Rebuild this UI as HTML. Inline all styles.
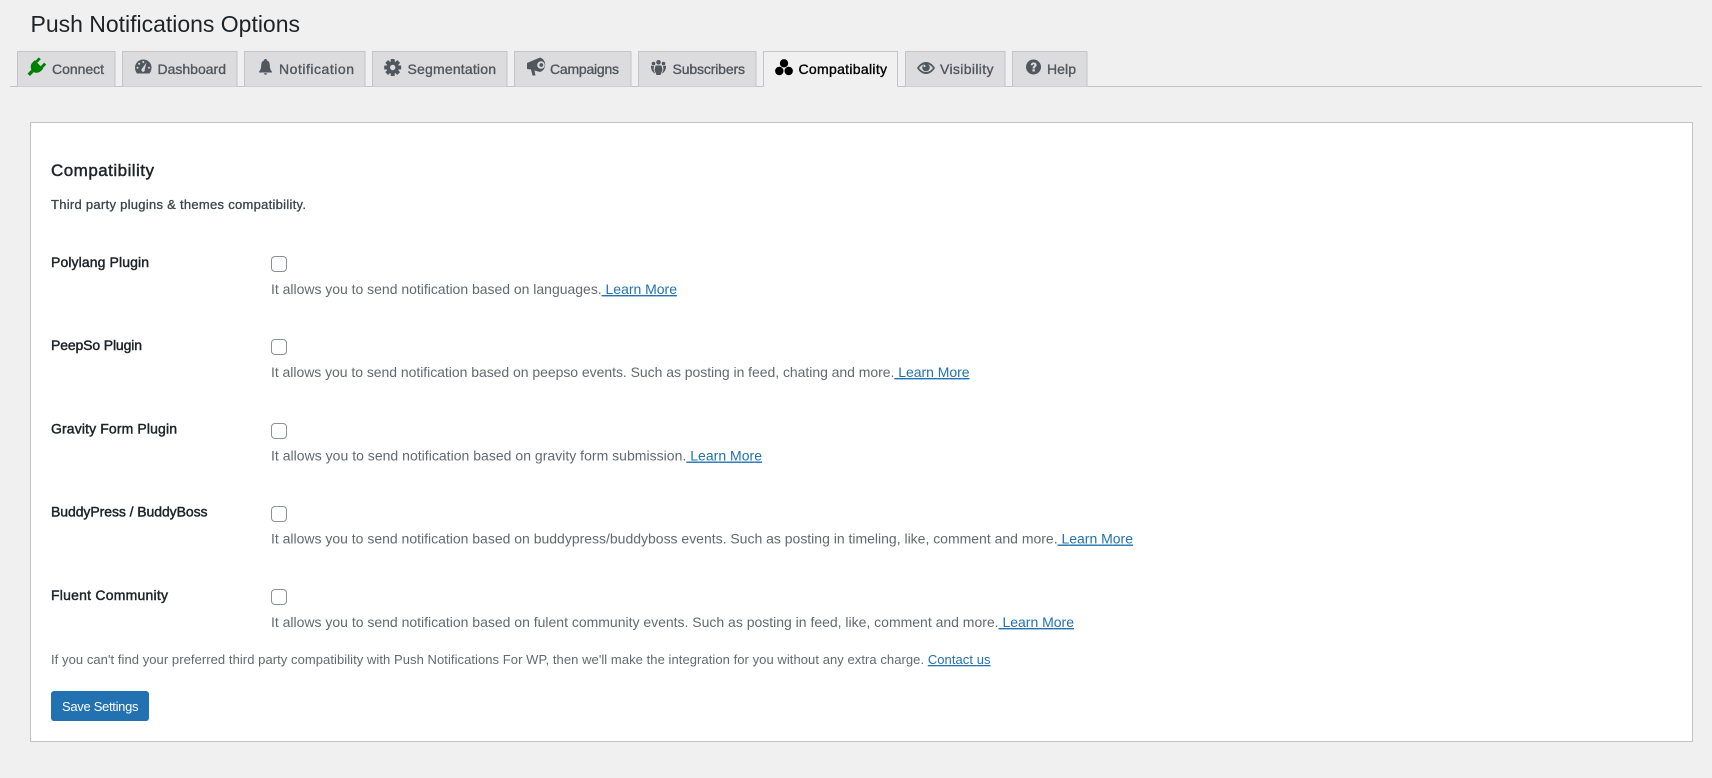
<!DOCTYPE html>
<html lang="en">
<head>
<meta charset="utf-8">
<title>Push Notifications Options</title>
<style>
html,body{margin:0;padding:0;width:1712px;height:778px;overflow:hidden;background:#f0f0f1}
svg{position:absolute;left:0;top:0;display:block}
text{font-family:"Liberation Sans",Arial,sans-serif;white-space:pre}
.tab{font-size:14px;fill:#50575e;stroke:#50575e;stroke-width:.35px}
.label{font-size:14px;fill:#1d2327;stroke:#1d2327;stroke-width:.45px}
.help{font-size:14px;fill:#646970}
.link{fill:#2271b1;text-decoration:underline}
input[type=checkbox]{appearance:none;-webkit-appearance:none;position:absolute;left:271px;width:16px;height:16px;margin:0;padding:0;box-sizing:border-box;background:#fff;border:1px solid #8c8f94;border-radius:4px}
</style>
</head>
<body>
<svg width="1712" height="778" viewBox="0 0 1712 778" xmlns="http://www.w3.org/2000/svg">
  <text x="30.500" y="32" font-size="23" fill="#1d2327" textLength="269.500">Push Notifications Options</text>

  <!-- nav line -->
  <rect x="10" y="86" width="1692" height="1" fill="#c3c4c7"/>

  <!-- tabs -->
  <g fill="#dcdcde" stroke="#c3c4c7">
    <path d="M17.5 86.5V51.5H115V86.5"/>
    <path d="M122.5 86.5V51.5H237V86.5"/>
    <path d="M244.5 86.5V51.5H365V86.5"/>
    <path d="M372.5 86.5V51.5H507V86.5"/>
    <path d="M514.5 86.5V51.5H631V86.5"/>
    <path d="M638.5 86.5V51.5H756V86.5"/>
    <path d="M905.5 86.5V51.5H1005V86.5"/>
    <path d="M1012.5 86.5V51.5H1087V86.5"/>
  </g>
  <rect x="763.5" y="51.5" width="134" height="36" fill="#f0f0f1"/>
  <path d="M763.5 86.5V51.5H897.5V86.5" fill="none" stroke="#c3c4c7"/>

  <!-- plug -->
  <g transform="translate(36.5,67) rotate(45)" fill="#008000">
    <rect x="-5.2" y="-8.5" width="2.8" height="5.5"/>
    <rect x="2.4" y="-8.5" width="2.8" height="5.5"/>
    <path d="M-6 -3.500H6V-.5C6 3.500 3 5 1.700 5.500V11H-1.700V5.500C-3 5-6 3.500-6 -.5Z"/>
  </g>

  <!-- gauge -->
  <path d="M137 73.500C135.800 72 135 70 135 67.500C135 63 138.700 59.500 143.300 59.500C147.900 59.500 151.500 63 151.500 67.500C151.500 70 150.700 72 149.500 73.500Z" fill="#50575e"/>
  <g fill="#dcdcde">
    <circle cx="143.300" cy="62" r="1"/><circle cx="139.200" cy="63.800" r="1"/><circle cx="137.500" cy="67.800" r="1"/><circle cx="149" cy="67.800" r="1"/>
    <path d="M146.500 62.500L144.700 69.500A1.700 1.700 0 1 1 141.800 69Z"/>
  </g>

  <!-- bell -->
  <path d="M265.500 59C264.500 59 264 59.700 264 60.500C261.800 61.300 261.300 63 261.200 65.500C261 68.500 260.500 70 259 71.700V72.500H272V71.700C270.500 70 270 68.500 269.800 65.500C269.700 63 269.200 61.300 267 60.500C267 59.700 266.500 59 265.500 59ZM263.800 73.300C264 74.300 264.600 74.800 265.500 74.800C266.400 74.800 267 74.300 267.200 73.300Z" fill="#50575e"/>

  <!-- gear -->
  <g transform="translate(392.700,67.500)" fill="#50575e">
    <rect x="-2" y="-8.500" width="4" height="17" rx=".5"/>
    <rect x="-2" y="-8.500" width="4" height="17" rx=".5" transform="rotate(45)"/>
    <rect x="-2" y="-8.500" width="4" height="17" rx=".5" transform="rotate(90)"/>
    <rect x="-2" y="-8.500" width="4" height="17" rx=".5" transform="rotate(135)"/>
    <circle r="6.200"/>
    <circle r="2.700" fill="#dcdcde"/>
  </g>

  <!-- megaphone -->
  <path d="M527 63V69L531 69.500L532.500 75.500H535.500L534.500 70.500L540 72A7 7.500 0 0 0 540 57.500Z" fill="#50575e"/>
  <circle cx="541" cy="65" r="3.800" fill="#dcdcde"/>
  <circle cx="541.300" cy="65" r="1.900" fill="#50575e"/>

  <!-- people -->
  <g fill="#50575e">
    <circle cx="658.500" cy="62.300" r="2.300"/>
    <circle cx="653.500" cy="63.500" r="1.800"/>
    <circle cx="663.500" cy="63.500" r="1.800"/>
    <path d="M655.500 65.500H661.500L662.500 70L660.500 75H656.500L654.500 70Z"/>
    <path d="M651 65.800H654L653.500 69.500L655 73.500C652.500 72.500 650.800 69.500 651 65.800Z"/>
    <path d="M666 65.800H663L663.500 69.500L662 73.500C664.500 72.500 666.200 69.500 666 65.800Z"/>
  </g>

  <!-- three circles -->
  <g fill="#000">
    <circle cx="784" cy="63.300" r="4.200"/>
    <circle cx="779.300" cy="71" r="4.200"/>
    <circle cx="788.700" cy="71" r="4.200"/>
  </g>

  <!-- eye -->
  <path d="M917 68C919.500 64.200 922.500 62 926 62C929.500 62 932.500 64.200 935 68C932.500 71.800 929.500 74 926 74C922.500 74 919.500 71.800 917 68Z" fill="#50575e"/>
  <path d="M919 68C921 65.500 923.200 64 926 64C928.800 64 931 65.500 933 68C931 70.500 928.800 72 926 72C923.200 72 921 70.500 919 68Z" fill="#dcdcde"/>
  <circle cx="926" cy="67.500" r="3.800" fill="#50575e"/>
  <circle cx="924.500" cy="66" r="1.100" fill="#dcdcde"/>

  <!-- help -->
  <circle cx="1033.500" cy="67" r="7.500" fill="#50575e"/>
  <path d="M1030.700 65.200C1030.800 63.500 1032 62.500 1033.700 62.500C1035.400 62.500 1036.600 63.500 1036.600 65C1036.600 66.800 1034.700 67 1034.700 68.500H1032.600C1032.500 66.300 1034.400 66 1034.400 65C1034.400 64.500 1034.100 64.200 1033.600 64.200C1033 64.200 1032.800 64.600 1032.700 65.200ZM1032.500 69.300H1034.800V71.500H1032.500Z" fill="#dcdcde"/>

  <!-- tab labels -->
  <text class="tab" x="52" y="74" textLength="52">Connect</text>
  <text class="tab" x="157.500" y="74" textLength="68.500">Dashboard</text>
  <text class="tab" x="279" y="74" textLength="75">Notification</text>
  <text class="tab" x="407.500" y="74" textLength="88.500">Segmentation</text>
  <text class="tab" x="550" y="74" textLength="69">Campaigns</text>
  <text class="tab" x="672.500" y="74" textLength="72.500">Subscribers</text>
  <text class="tab" x="798.500" y="74" textLength="88.500" style="fill:#000;stroke:#000">Compatibality</text>
  <text class="tab" x="940" y="74" textLength="53.500">Visibility</text>
  <text class="tab" x="1047" y="74" textLength="29">Help</text>

  <!-- card -->
  <rect x="30.500" y="122.500" width="1662" height="619" fill="#fff" stroke="#c3c4c7"/>

  <text x="51" y="176" font-size="17" fill="#1d2327" stroke="#1d2327" stroke-width=".45" textLength="103">Compatibility</text>
  <text x="51" y="209" font-size="13" fill="#3c434a" stroke="#3c434a" stroke-width=".3" textLength="255">Third party plugins &amp; themes compatibility.</text>

  <text class="label" x="51" y="267" textLength="98">Polylang Plugin</text>
  <text class="help" x="271" y="294" textLength="406">It allows you to send notification based on languages.<a href="#"><tspan class="link"> Learn More</tspan></a></text>

  <text class="label" x="51" y="350" textLength="91">PeepSo Plugin</text>
  <text class="help" x="271" y="377" textLength="698.500">It allows you to send notification based on peepso events. Such as posting in feed, chating and more.<a href="#"><tspan class="link"> Learn More</tspan></a></text>

  <text class="label" x="51" y="433.500" textLength="126">Gravity Form Plugin</text>
  <text class="help" x="271" y="460.500" textLength="491">It allows you to send notification based on gravity form submission.<a href="#"><tspan class="link"> Learn More</tspan></a></text>

  <text class="label" x="51" y="516.500" textLength="156.500">BuddyPress / BuddyBoss</text>
  <text class="help" x="271" y="543.500" textLength="862">It allows you to send notification based on buddypress/buddyboss events. Such as posting in timeling, like, comment and more.<a href="#"><tspan class="link"> Learn More</tspan></a></text>

  <text class="label" x="51" y="600" textLength="117">Fluent Community</text>
  <text class="help" x="271" y="627" textLength="803">It allows you to send notification based on fulent community events. Such as posting in feed, like, comment and more.<a href="#"><tspan class="link"> Learn More</tspan></a></text>

  <text x="51" y="664" font-size="13" fill="#646970" textLength="939.500">If you can't find your preferred third party compatibility with Push Notifications For WP, then we'll make the integration for you without any extra charge. <a href="#"><tspan class="link">Contact us</tspan></a></text>

  <rect x="51" y="691" width="98" height="30" rx="3" fill="#2271b1"/>
  <text x="62" y="711" font-size="13" fill="#fff" textLength="76.500">Save Settings</text>
</svg>
<input type="checkbox" aria-label="Polylang Plugin" style="top:256px">
<input type="checkbox" aria-label="PeepSo Plugin" style="top:339px">
<input type="checkbox" aria-label="Gravity Form Plugin" style="top:423px">
<input type="checkbox" aria-label="BuddyPress / BuddyBoss" style="top:506px">
<input type="checkbox" aria-label="Fluent Community" style="top:589px">
</body>
</html>
